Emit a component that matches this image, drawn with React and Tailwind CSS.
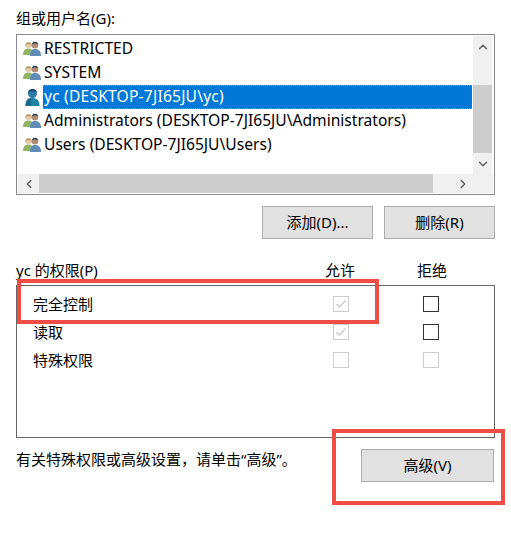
import { ChevronUp, ChevronDown, ChevronLeft, ChevronRight } from 'lucide-react';

const font = { fontFamily: '"Noto Sans", "Noto Sans CJK SC", sans-serif' };

const rows = [
  { name: 'RESTRICTED', group: true },
  { name: 'SYSTEM', group: true },
  { name: 'yc (DESKTOP-7JI65JU\\yc)', selected: true },
  { name: 'Administrators (DESKTOP-7JI65JU\\Administrators)', group: true },
  { name: 'Users (DESKTOP-7JI65JU\\Users)', group: true },
];

const perms = [
  { name: '完全控制', allow: 'checked', deny: 'on' },
  { name: '读取', allow: 'checked', deny: 'on' },
  { name: '特殊权限', allow: 'off', deny: 'off' },
];

function GroupIcon() {
  return (
    <svg width="18" height="16" viewBox="0 0 18 16" className="shrink-0">
      <circle cx="5.5" cy="4" r="3" fill="#e2c9a4" />
      <path d="M2.3 6 C1.5 -0.5 9.5 -0.5 8.7 6 L7.6 3 L3.6 3 Z" fill="#b39a62" />
      <path d="M0 14 C0 9 2.5 7.5 5.5 7.5 C8.5 7.5 10 9 10 14 Z" fill="#8fb565" />
      <circle cx="12" cy="4.2" r="3.2" fill="#b08c72" />
      <path d="M8.8 4 C8.5 -0.2 15.5 -0.2 15.2 4 L14 2.5 L10 2.5 Z" fill="#27404f" />
      <path d="M7 15 C7 9.5 9 8 12 8 C15 8 18 9.5 18 15 Z" fill="#5f8db8" />
    </svg>
  );
}

function UserIcon() {
  return (
    <svg width="15" height="19" viewBox="0 0 15 19" className="mr-[1px] shrink-0">
      <circle cx="7.5" cy="5.5" r="4.5" fill="#2f7aa6" />
      <path d="M3 5 C3 -0.5 12 -0.5 12 5 L10 3.5 L5 3.5 Z" fill="#1d4a70" />
      <path d="M0.5 18 C0.5 12 3.5 10 7.5 10 C11.5 10 14.5 12 14.5 18 Z" fill="#1f86a8" />
      <path d="M0.5 18 C0.5 12 3.5 10 6 10 L6 18 Z" fill="#176b8c" />
    </svg>
  );
}

function Checkbox({ state }) {
  const active = state === 'on';
  return (
    <div className={`flex h-4 w-4 items-center justify-center border ${active ? 'border-[#333333]' : 'border-[#cccccc]'}`}>
      {state === 'checked' && (
        <svg width="12" height="10" viewBox="0 0 12 10" fill="none">
          <path d="M1.5 5 L4.5 8 L10.5 1.5" stroke="#cccccc" strokeWidth="1.4" />
        </svg>
      )}
    </div>
  );
}

function WinButton({ children, className }) {
  return (
    <button className={`h-[33px] border border-[#adadad] bg-[#e1e1e1] text-[15px] text-black ${className}`}>
      {children}
    </button>
  );
}

export default function App() {
  return (
    <div className="relative h-[538px] w-[511px] overflow-hidden bg-white text-[15px] text-black" style={font}>
      <div className="px-4 pt-[8px]">
        <div className="h-[26px] leading-[20px]">组或用户名(G):</div>

        <div className="h-[161px] w-[479px] border border-[#8a8a8a] p-px">
          <div className="flex h-[138px]">
            <div className="w-[454px] pt-[1px] text-[15.6px]">
              {rows.map((r) => (
                <div key={r.name} className="flex h-6 items-center">
                  <div className="flex w-[24px] justify-end pr-[1px] pl-1">
                    {r.group ? <GroupIcon /> : <UserIcon />}
                  </div>
                  <div
                    className={
                      r.selected
                        ? 'ml-[1px] flex h-6 flex-1 items-center border border-x-0 border-dotted border-[#d98a3c] bg-[#0078d7] pl-[1px] tracking-[0.2px] text-white'
                        : 'ml-[2px] flex-1'
                    }
                  >
                    {r.name}
                  </div>
                </div>
              ))}
            </div>
            <div className="ml-[1px] flex w-[19px] flex-col items-center justify-between bg-[#f0f0f0]">
              <div className="flex h-[48px] w-full flex-col items-center pt-[4px]">
                <ChevronUp size={14} strokeWidth={2.5} color="#606060" />
              </div>
              <div className="h-[68px] w-full bg-[#cdcdcd]" />
              <div className="flex h-[21px] w-full items-center justify-center">
                <ChevronDown size={14} strokeWidth={2.5} color="#606060" />
              </div>
            </div>
          </div>
          <div className="flex h-[19px] bg-[#f0f0f0]">
            <div className="flex w-[21px] items-center justify-center">
              <ChevronLeft size={14} strokeWidth={2.5} color="#606060" />
            </div>
            <div className="w-[394px] bg-[#cdcdcd]" />
            <div className="flex flex-1 items-center pl-[23px]">
              <ChevronRight size={14} strokeWidth={2.5} color="#606060" />
            </div>
          </div>
        </div>

        <div className="mt-[11px] flex w-[479px] justify-end gap-[11px]">
          <WinButton className="w-[111px]">添加(D)...</WinButton>
          <WinButton className="w-[111px]">删除(R)</WinButton>
        </div>

        <div className="mt-[21px] flex h-[25px] items-start leading-[20px]">
          <div className="w-[309px]">yc 的权限(P)</div>
          <div className="w-[92px]">允许</div>
          <div>拒绝</div>
        </div>

        <div className="h-[153px] w-[479px] border border-[#666666] pt-[10px]">
          {perms.map((p) => (
            <div key={p.name} className="flex h-[28px] items-start">
              <div className="w-[316px] pl-4 leading-[16px]">{p.name}</div>
              <Checkbox state={p.allow} />
              <div className="w-[74px]" />
              <Checkbox state={p.deny} />
            </div>
          ))}
        </div>

        <div className="mt-[11px] flex w-[478px] items-start justify-between">
          <div className="leading-[20px]">有关特殊权限或高级设置，请单击“高级”。</div>
          <WinButton className="w-[133px]">高级(V)</WinButton>
        </div>
      </div>

      {/* annotation boxes drawn over the dialog */}
      <div className="absolute top-[279px] left-[17px] h-[45px] w-[362px] border-4 border-[#ef4d45]" />
      <div className="absolute top-[429px] left-[332px] h-[76px] w-[173px] border-4 border-[#ef4d45]" />
    </div>
  );
}
